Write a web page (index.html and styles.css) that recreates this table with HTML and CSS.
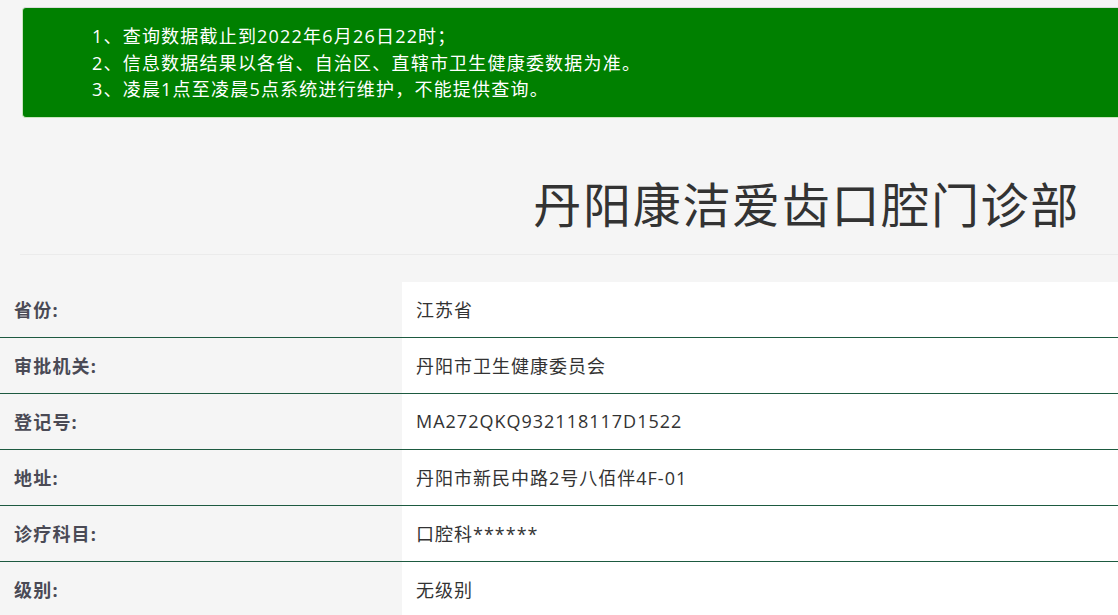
FILE: index.html
```html
<!DOCTYPE html>
<html lang="zh-CN">
<head>
<meta charset="utf-8">
<title>丹阳康洁爱齿口腔门诊部</title>
<link rel="stylesheet" href="styles.css">
</head>
<body>
<div class="page">
  <div class="notice">
    <p>1、查询数据截止到2022年6月26日22时；</p>
    <p>2、信息数据结果以各省、自治区、直辖市卫生健康委数据为准。</p>
    <p>3、凌晨1点至凌晨5点系统进行维护，不能提供查询。</p>
  </div>
  <h1 class="title">丹阳康洁爱齿口腔门诊部</h1>
  <div class="divider"></div>
  <div class="info">
    <div class="row"><div class="label">省份:</div><div class="value">江苏省</div></div>
    <div class="row"><div class="label">审批机关:</div><div class="value">丹阳市卫生健康委员会</div></div>
    <div class="row"><div class="label">登记号:</div><div class="value">MA272QKQ932118117D1522</div></div>
    <div class="row"><div class="label">地址:</div><div class="value">丹阳市新民中路2号八佰伴4F-01</div></div>
    <div class="row"><div class="label">诊疗科目:</div><div class="value">口腔科******</div></div>
    <div class="row"><div class="label">级别:</div><div class="value">无级别</div></div>
  </div>
</div>
</body>
</html>
```

FILE: styles.css
```css
html, body {
  margin: 0;
  padding: 0;
  background: #f5f5f5;
  overflow: hidden;
}
body {
  font-family: "Open Sans", "Noto Sans CJK SC", sans-serif;
  color: #333;
}
.page {
  width: 1118px;
}
.notice {
  margin: 7px 0 0 22px;
  background: #008000;
  border: 1px solid #c9e6bd;
  border-top-color: #dcdcdc;
  border-right: none;
  border-radius: 4px 0 0 4px;
  padding: 15px 0 14px 69px;
  color: #fff;
  font-size: 18px;
  letter-spacing: 1.2px;
}
.notice p {
  margin: 0;
  line-height: 26.5px;
}
.title {
  margin: 0;
  height: 104px;
  padding-top: 32px;
  display: flex;
  align-items: center;
  justify-content: flex-end;
  padding-right: 38px;
  font-size: 48px;
  font-weight: normal;
  letter-spacing: 1.7px;
  color: #333;
}
.divider {
  margin-left: 20px;
  border-top: 1px solid #ebebeb;
  height: 27px;
}
.info {
  display: flex;
  flex-direction: column;
}
.row {
  display: flex;
  height: 55px;
  border-bottom: 1px solid #1d5a40;
}
.row:last-child {
  border-bottom: none;
}
.label {
  width: 388px;
  padding-left: 14px;
  display: flex;
  align-items: center;
  font-size: 18px;
  font-weight: bold;
  color: #4a4a55;
  letter-spacing: 1.2px;
}
.value {
  flex: 1;
  background: #fff;
  padding-left: 14px;
  display: flex;
  align-items: center;
  font-size: 18px;
  letter-spacing: 1px;
  color: #333;
}
```
